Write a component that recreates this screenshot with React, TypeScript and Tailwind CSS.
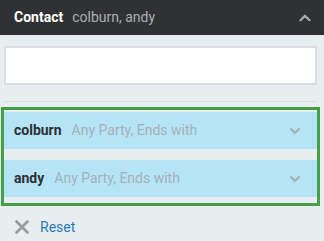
import React from 'react';
import { ChevronDown, ChevronUp, X } from 'lucide-react';

const rows = [
  { name: 'colburn', detail: 'Any Party, Ends with' },
  { name: 'andy', detail: 'Any Party, Ends with' },
];

const App: React.FC = () => {
  return (
    <div className="w-[324px] h-[241px] bg-[#e8edf0] font-['Roboto',sans-serif] overflow-hidden">
      {/* Header */}
      <div className="h-[35px] bg-[#303134] flex items-center justify-between pl-[14px] pr-[10px]">
        <div className="flex items-center gap-[9px] text-[14px]">
          <span className="font-bold text-white">Contact</span>
          <span className="text-[#a9afb4]">colburn, andy</span>
        </div>
        <ChevronUp size={18} strokeWidth={3} className="text-[#a7adb2]" />
      </div>

      {/* Input */}
      <div className="mt-[11px] mx-[4px] mr-[7px] h-[39px] bg-white border-2 border-[#d6dfe3]" />

      <div className="mt-[16px] mx-[4px] mr-[7px] h-px bg-[#d6dde1]" />

      {/* Selected terms */}
      <div className="mt-[5px] ml-[1px] mr-[4px] border-[3px] border-[#43a047] pt-[2px] pb-[6px] flex flex-col gap-[11px]">
        {rows.map((row) => (
          <div
            key={row.name}
            className="h-[37px] bg-[#b5e4f7] flex items-center justify-between pl-[10px] pr-[14px]"
          >
            <div className="flex items-center gap-[10px] text-[14px]">
              <span className="font-bold text-[#2c2f33]">{row.name}</span>
              <span className="text-[#a6b1b7]">{row.detail}</span>
            </div>
            <ChevronDown size={16} strokeWidth={3} className="text-[#a3afb6]" />
          </div>
        ))}
      </div>

      {/* Reset */}
      <div className="flex items-center gap-[7px] pl-[11px] pt-[10px]">
        <X size={22} strokeWidth={3} className="text-[#9a9ea1]" />
        <span className="text-[14px] text-[#2a79b9]">Reset</span>
      </div>
    </div>
  );
};

export default App;
